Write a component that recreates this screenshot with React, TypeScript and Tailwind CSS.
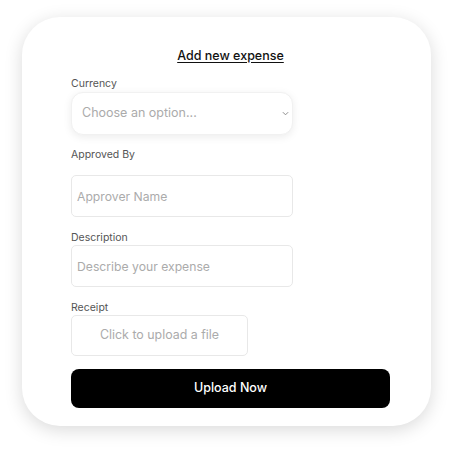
import { useState } from "react";

const FONT = { fontFamily: "Inter, 'Noto Sans', sans-serif" };

function Label({ children, className = "" }: { children: React.ReactNode; className?: string }) {
  return <label className={`block text-[10.5px] leading-3 text-[#555] ${className}`}>{children}</label>;
}

export default function App() {
  const [currency, setCurrency] = useState("");
  const [approver, setApprover] = useState("");
  const [description, setDescription] = useState("");

  return (
    <div className="min-h-[452px] w-[453px] bg-white pt-[17px] px-[22px]" style={FONT}>
      <div className="w-[409px] h-[409px] bg-white rounded-[38px] shadow-[0_4px_18px_rgba(0,0,0,0.15)] pl-[49px] pr-[41px] pt-[30px]">
        <h2 className="text-center text-[12.5px] leading-[18px] font-medium text-[#111] underline underline-offset-2">
          Add new expense
        </h2>

        <Label className="mt-[13px]">Currency</Label>
        <div className="relative mt-[2px] w-[222px]">
          <select
            value={currency}
            onChange={(e) => setCurrency(e.target.value)}
            className="w-full h-[43px] appearance-none rounded-xl bg-white border border-[#f1f1f1] shadow-[0_2px_8px_rgba(0,0,0,0.08)] pl-[10px] pr-6 text-[12.5px] text-[#ababab] outline-none"
          >
            <option value="">Choose an option...</option>
            <option value="usd">USD</option>
            <option value="eur">EUR</option>
          </select>
          <svg
            className="pointer-events-none absolute right-[4px] top-[19px]"
            width="7"
            height="5"
            viewBox="0 0 8 5"
            fill="none"
            stroke="#888"
            strokeWidth="1.1"
          >
            <path d="M1 1l3 3 3-3" />
          </svg>
        </div>

        <Label className="mt-[14px]">Approved By</Label>
        <input
          type="text"
          value={approver}
          onChange={(e) => setApprover(e.target.value)}
          placeholder="Approver Name"
          className="mt-[14px] block w-[222px] h-[42px] rounded-[5px] border border-[#e8e8e8] px-[5px] text-[12.2px] text-[#333] placeholder:text-[#ababab] outline-none"
        />

        <Label className="mt-[15px]">Description</Label>
        <input
          type="text"
          value={description}
          onChange={(e) => setDescription(e.target.value)}
          placeholder="Describe your expense"
          className="mt-[1px] block w-[222px] h-[42px] rounded-[5px] border border-[#e8e8e8] px-[5px] text-[12.2px] text-[#333] placeholder:text-[#ababab] outline-none"
        />

        <Label className="mt-[15px]">Receipt</Label>
        <button
          type="button"
          className="mt-[1px] flex items-center justify-center w-[177px] h-[41px] rounded-[5px] border border-[#e8e8e8] bg-white text-[12.4px] text-[#ababab]"
        >
          Click to upload a file
        </button>

        <button
          type="button"
          className="mt-[13px] w-[319px] h-[39px] rounded-lg bg-black text-white text-[12.5px] font-medium"
        >
          Upload Now
        </button>
      </div>
    </div>
  );
}
